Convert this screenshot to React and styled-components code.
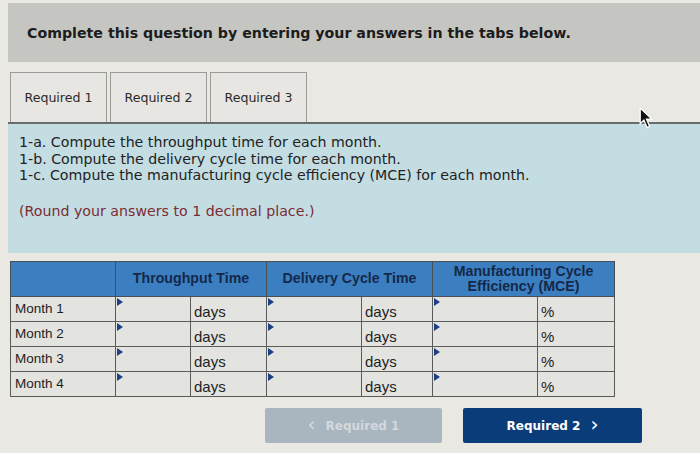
import React from 'react'
import styled, { createGlobalStyle } from 'styled-components'

const GlobalStyle = createGlobalStyle`
  html, body {
    margin: 0;
    padding: 0;
    background: #e9e8e3;
  }
  body {
    font-family: "Liberation Sans", Arial, sans-serif;
  }
`

const months = ['Month 1', 'Month 2', 'Month 3', 'Month 4']

const App = () => {
  return (
    <Page>
      <GlobalStyle />
      <Header>Complete this question by entering your answers in the tabs below.</Header>
      <Tabs>
        <Tab>Required 1</Tab>
        <Tab>Required 2</Tab>
        <Tab>Required 3</Tab>
      </Tabs>
      <Panel>
        <Line>1-a. Compute the throughput time for each month.</Line>
        <Line>1-b. Compute the delivery cycle time for each month.</Line>
        <Line>1-c. Compute the manufacturing cycle efficiency (MCE) for each month.</Line>
        <Note>(Round your answers to 1 decimal place.)</Note>
      </Panel>
      <Table>
        <colgroup>
          <col style={{ width: 105 }} />
          <col style={{ width: 75 }} />
          <col style={{ width: 76 }} />
          <col style={{ width: 95 }} />
          <col style={{ width: 71 }} />
          <col style={{ width: 105 }} />
          <col style={{ width: 77 }} />
        </colgroup>
        <thead>
          <tr>
            <HeadCell />
            <HeadCell colSpan={2}>Throughput Time</HeadCell>
            <HeadCell colSpan={2}>Delivery Cycle Time</HeadCell>
            <HeadCell colSpan={2}>Manufacturing Cycle<br />Efficiency (MCE)</HeadCell>
          </tr>
        </thead>
        <tbody>
          {months.map((m) => (
            <tr key={m}>
              <LabelCell>{m}</LabelCell>
              <InputCell />
              <UnitCell>days</UnitCell>
              <InputCell />
              <UnitCell>days</UnitCell>
              <InputCell />
              <UnitCell>%</UnitCell>
            </tr>
          ))}
        </tbody>
      </Table>
      <Buttons>
        <NavButton disabled>
          <Chevron>&lsaquo;</Chevron> Required 1
        </NavButton>
        <NavButton $primary>
          Required 2 <Chevron>&rsaquo;</Chevron>
        </NavButton>
      </Buttons>
      <Cursor viewBox="0 0 14 21">
        <path d="M1 1 L1 16 L4.5 12.5 L7.5 19.5 L10 18.5 L7 11.5 L12 11.5 Z" fill="#111" stroke="#fff" strokeWidth="1.2" />
      </Cursor>
    </Page>
  )
}

const Page = styled.div`
  position: relative;
  width: 700px;
  height: 453px;
  padding: 3px 0 0 8px;
  box-sizing: border-box;
  overflow: hidden;
`

const Header = styled.div`
  height: 59px;
  background: #c5c5c1;
  display: flex;
  align-items: center;
  padding-left: 19px;
  box-sizing: border-box;
  font-family: "DejaVu Sans", Verdana, sans-serif;
  font-weight: 700;
  font-size: 14.2px;
  color: #1c1c1c;
`

const Tabs = styled.div`
  display: flex;
  gap: 3px;
  margin-top: 10px;
  padding-left: 2px;
`

const Tab = styled.div`
  width: 97px;
  height: 50px;
  box-sizing: border-box;
  border: 1px solid #9b9b98;
  border-bottom: none;
  background: #e7e6e2;
  display: flex;
  align-items: center;
  justify-content: center;
  font-family: "DejaVu Sans", Verdana, sans-serif;
  font-size: 12.6px;
  color: #2a2a2a;
`

const Panel = styled.div`
  height: 131px;
  box-sizing: border-box;
  background: #c3dde3;
  border-top: 2px solid #686c6d;
  padding: 10px 11px;
  font-family: "DejaVu Sans", Verdana, sans-serif;
  font-size: 14.2px;
  color: #222;
`

const Line = styled.div`
  line-height: 16.7px;
`

const Note = styled.div`
  margin-top: 19px;
  color: #7d2b33;
  line-height: 16.7px;
`

const Table = styled.table`
  margin: 8px 0 0 2px;
  border-collapse: collapse;
  table-layout: fixed;
  width: 604px;
`

const HeadCell = styled.th`
  height: 34px;
  padding: 0;
  background: #3b7fc1;
  border: 1px solid #4a4f55;
  font-size: 14.2px;
  font-weight: 700;
  color: #15284a;
  line-height: 15.5px;
  text-align: center;
`

const Cell = styled.td`
  height: 23px;
  padding: 0 3px;
  border: 1.5px solid #5a5a58;
  background: #e3e3df;
  font-size: 13.5px;
  line-height: 16px;
  color: #1e1e1e;
`

const LabelCell = styled(Cell)`
  padding-left: 4px;
`

const InputCell = styled(Cell)`
  position: relative;
  &::before {
    content: '';
    position: absolute;
    top: 1px;
    left: 1px;
    border-top: 4px solid transparent;
    border-bottom: 4px solid transparent;
    border-left: 6px solid #1d3f86;
  }
`

const UnitCell = styled(Cell)`
  font-size: 15px;
  vertical-align: bottom;
  padding-bottom: 1px;
`

const Buttons = styled.div`
  display: flex;
  gap: 21px;
  margin: 11px 0 0 257px;
`

const NavButton = styled.button`
  width: ${(p) => (p.$primary ? '179px' : '177px')};
  height: 35px;
  border: none;
  border-radius: 2px;
  background: ${(p) => (p.$primary ? '#0b3c7a' : '#a9b5bf')};
  color: ${(p) => (p.$primary ? '#ffffff' : '#d3d9de')};
  font-family: "DejaVu Sans", Verdana, sans-serif;
  font-weight: 700;
  font-size: 12px;
  display: flex;
  align-items: center;
  justify-content: center;
  gap: 10px;
  padding: 0;
`

const Chevron = styled.span`
  font-weight: 400;
  font-size: 20px;
  line-height: 1;
  margin-top: -3px;
`

const Cursor = styled.svg`
  position: absolute;
  left: 639px;
  top: 107px;
  width: 15px;
  height: 22px;
`

export default App
